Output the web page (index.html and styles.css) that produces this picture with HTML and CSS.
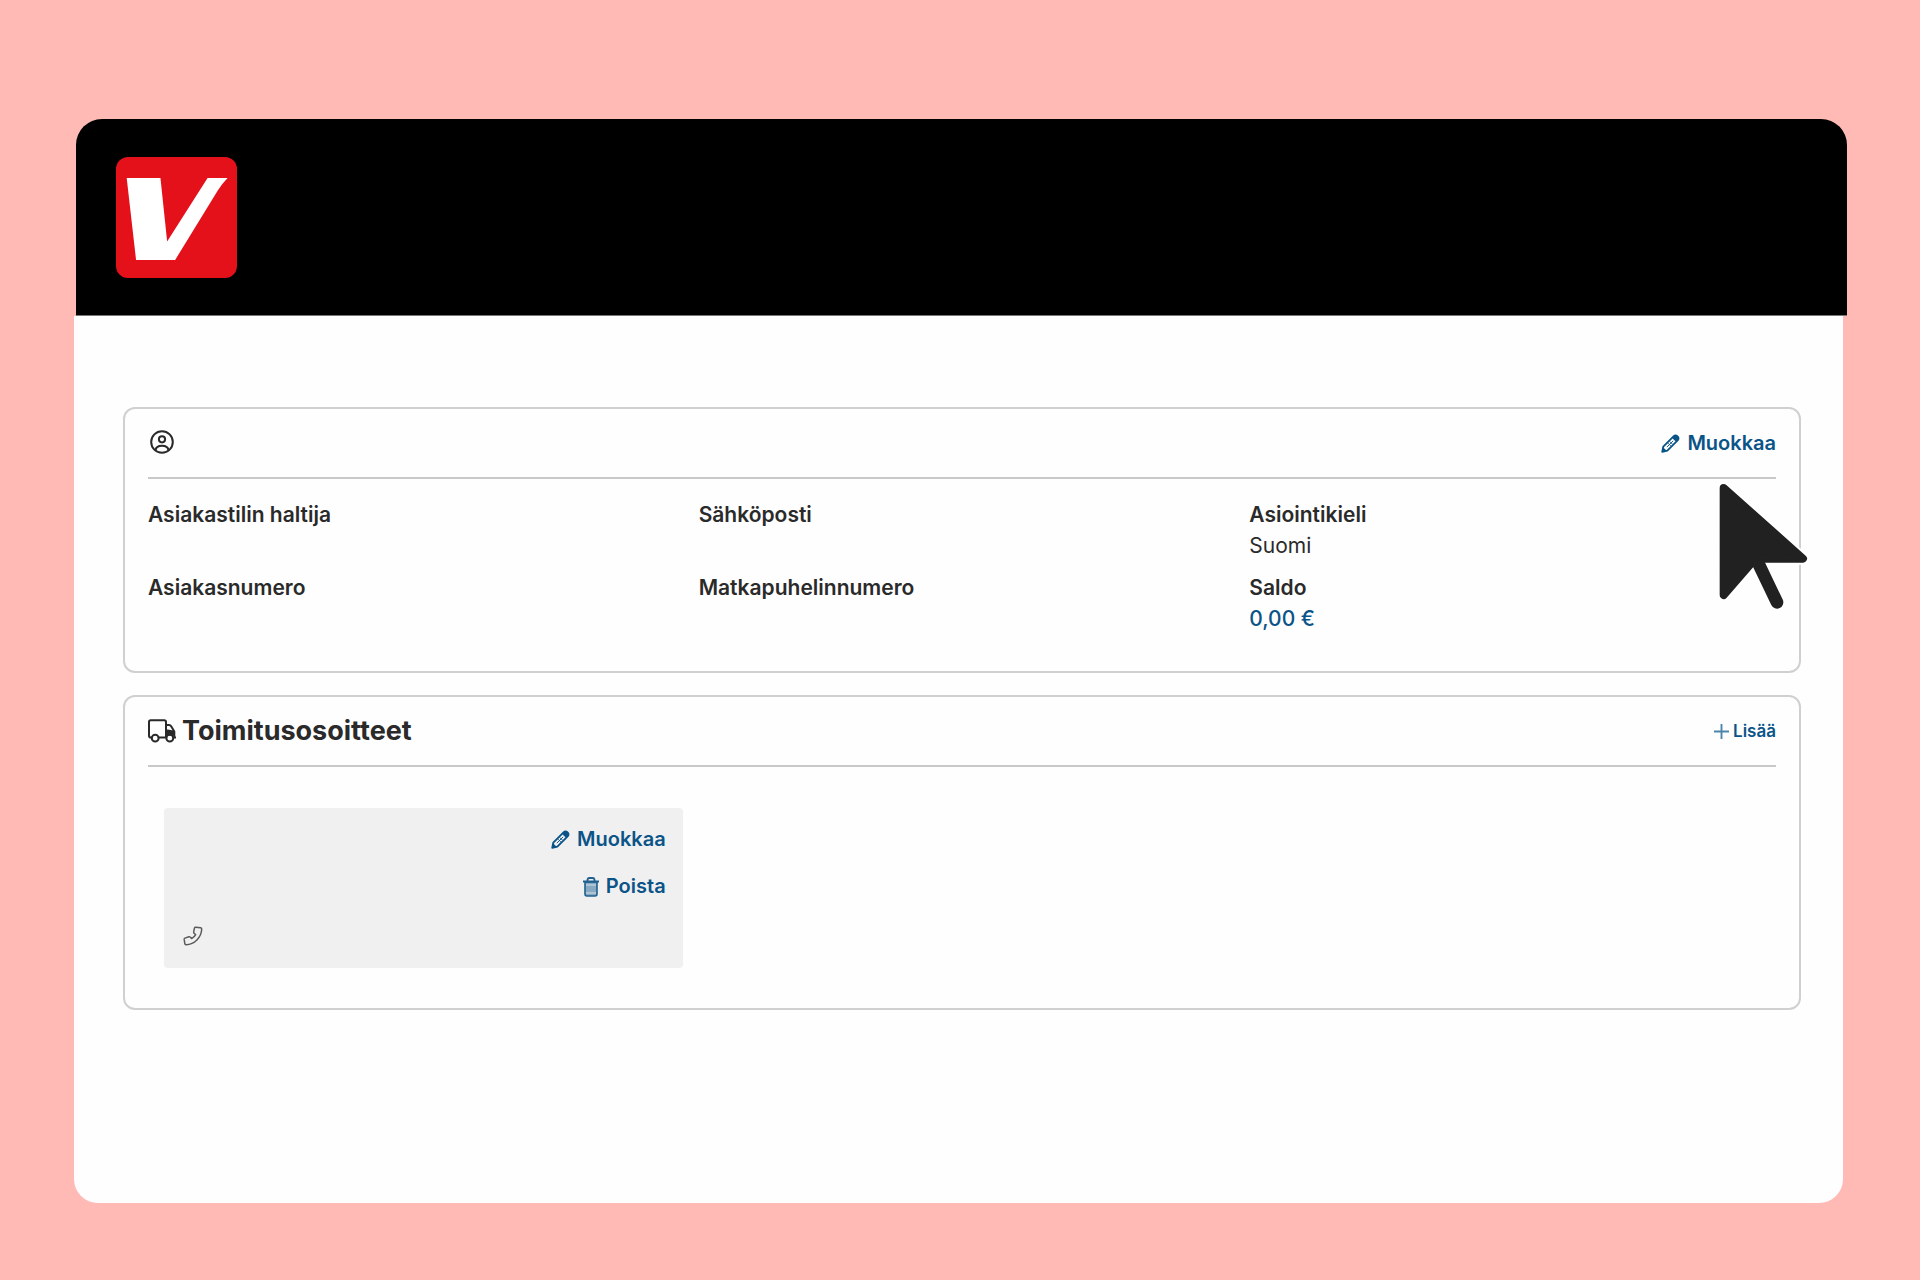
FILE: index.html
```html
<!DOCTYPE html>
<html lang="fi">
<head>
<meta charset="utf-8">
<meta name="viewport" content="width=device-width, initial-scale=1">
<title>Asiakastili</title>
<link rel="stylesheet" href="styles.css">
</head>
<body>
<svg class="sprite" aria-hidden="true">
  <symbol id="pencil" viewBox="0 0 20 20">
    <path d="M1.300 18.700 2.400 13.300 13.200 2.500Q15.200.600 17.400 2.600 19.400 4.800 17.500 6.800L6.700 17.600Z" fill="none" stroke="currentColor" stroke-width="1.900" stroke-linejoin="round"/>
    <path d="M11.500 4 14.200 1.500Q16 .700 17.800 2.200 19.300 4 18.500 5.800L16 8.500ZM1 19 2 13.800 6.200 18Z" fill="currentColor"/>
    <path d="M6.200 13.800 12.800 7.200M9.300 7.900l2.800 2.800M7.500 9.700l2.800 2.800" fill="none" stroke="currentColor" stroke-width="1"/>
  </symbol>
</svg>
<header class="topbar">
  <a class="logo" href="#" aria-label="Etusivu">
    <svg viewBox="0 0 362 362" aria-hidden="true">
      <rect width="362" height="362" rx="36" fill="#e4111b"/>
      <path d="M32 63H133L153 253 274 63H334Q318 79 304 101L177 308H60Z" fill="#fff"/>
    </svg>
  </a>
</header>
<main class="page">
  <section class="card" aria-label="Asiakastiedot">
    <div class="card-head">
      <svg class="icon-user" viewBox="0 0 24 24" fill="none" stroke="currentColor" stroke-width="2" aria-hidden="true">
        <circle cx="12" cy="12" r="10.800"/>
        <circle cx="12" cy="9.300" r="3.100"/>
        <path d="M5.600 20.300C5.800 16.900 8.500 15.700 12 15.700S18.200 16.900 18.400 20.300"/>
      </svg>
      <button class="action" type="button"><svg class="icon-pencil" aria-hidden="true"><use href="#pencil"/></svg>Muokkaa</button>
    </div>
    <dl class="details">
      <div class="detail"><dt>Asiakastilin haltija</dt><dd></dd></div>
      <div class="detail"><dt>Sähköposti</dt><dd></dd></div>
      <div class="detail"><dt>Asiointikieli</dt><dd>Suomi</dd></div>
      <div class="detail"><dt>Asiakasnumero</dt><dd></dd></div>
      <div class="detail"><dt>Matkapuhelinnumero</dt><dd></dd></div>
      <div class="detail"><dt>Saldo</dt><dd><a class="balance" href="#">0,00 €</a></dd></div>
    </dl>
    <svg class="pointer" viewBox="348 258 276 390" aria-hidden="true">
      <g fill="#fff" stroke="#fff" stroke-linejoin="round" stroke-linecap="round">
        <path d="M371 282 609 494H466L371 603Z" stroke-width="36"/>
        <path d="M476 510 531 625" stroke-width="46"/>
      </g>
      <g fill="#212121" stroke="#212121" stroke-linejoin="round" stroke-linecap="round">
        <path d="M371 282 609 494H466L371 603Z" stroke-width="24"/>
        <path d="M476 510 531 625" stroke-width="38"/>
      </g>
    </svg>
  </section>
  <section class="card" aria-labelledby="addresses">
    <div class="card-head">
      <div class="title">
        <svg class="icon-truck" viewBox="0 0 28 24" fill="none" stroke="currentColor" stroke-width="2" stroke-linejoin="round" aria-hidden="true">
          <path d="M4 18.500H2.800Q1 18.500 1 16.700V3Q1 1.200 2.800 1.200H16.200Q18 1.200 18 3V18.500M10.500 18.500H18M18 6H21Q22.500 6 23.300 7.400L26.300 12.500V18.500H25.500M26.300 18.500H28"/>
          <path d="M19.500 11.500 25.500 12.500V16L19.500 15Z" fill="currentColor"/>
          <circle cx="7.200" cy="19.200" r="3.400"/>
          <circle cx="21.800" cy="19.200" r="3.400"/>
        </svg>
        <h2 id="addresses">Toimitusosoitteet</h2>
      </div>
      <button class="action action-small" type="button">
        <svg class="icon-plus" viewBox="0 0 16 16" stroke="#4a86ab" stroke-width="2" aria-hidden="true"><path d="M8 0V16M0 8H16"/></svg>Lisää
      </button>
    </div>
    <div class="addresses">
      <article class="address">
        <div class="address-actions">
          <button class="action" type="button"><svg class="icon-pencil" aria-hidden="true"><use href="#pencil"/></svg>Muokkaa</button>
          <button class="action" type="button">
            <svg class="icon-trash" viewBox="0 0 16 20" aria-hidden="true">
              <path d="M2 5H14V17Q14 19 12 19H4Q2 19 2 17Z" fill="#87a9c1" stroke="#1f608f" stroke-width="1.600"/>
              <path d="M0 4.500H16M4.500 4V3Q4.500 1 6.500 1H9.500Q11.500 1 11.500 3V4" fill="none" stroke="#1f608f" stroke-width="1.800"/>
              <path d="M3 8H13M3 16H13" stroke="#d6e0e8" stroke-width="1"/>
            </svg>Poista
          </button>
        </div>
        <svg class="icon-phone" viewBox="0 0 20 20" fill="none" stroke="#5a5a5a" stroke-width="1.500" stroke-linejoin="round" aria-hidden="true">
          <path d="M12.600 1.200 17.600 1.800Q18.800 2 18.700 3.200C18.300 11.500 11.500 18.300 3.200 18.700Q2 18.800 1.800 17.600L1.200 13.400Q1.100 12.500 1.900 12.100L5.900 10.700Q6.700 10.500 7.200 11.100L8.600 12.600Q11.300 11.200 12.600 8.600L11.100 7.200Q10.500 6.700 10.700 5.900L11.500 1.900Q11.800 1.100 12.600 1.200Z"/>
        </svg>
      </article>
    </div>
  </section>
</main>
</body>
</html>
```

FILE: styles.css
```css
* { box-sizing: border-box; }

body {
  margin: 0;
  padding: 119px 0 72px;
  min-height: 100vh;
  background: #ffbab5;
  color: #2a2a2a;
  font-family: Inter, "Liberation Sans", sans-serif;
  font-size: 21px;
  line-height: 31px;
}

.sprite { display: none; }
svg { flex: none; }

.topbar {
  display: flex;
  align-items: center;
  height: 197px;
  margin: 0 73px 0 76px;
  padding: 0 40px;
  background: #000;
  border-bottom: 1px solid #777;
  border-radius: 26px 26px 0 0;
}

.logo, .logo svg { display: block; width: 121px; height: 121px; }

.page {
  display: flex;
  flex-direction: column;
  gap: 22px;
  margin: 0 77px 0 74px;
  padding: 91px 42px 193px 49px;
  background: #fefefe;
  border-radius: 0 0 24px 24px;
}

.card {
  position: relative;
  padding: 0 23px;
  border: 2px solid #d0d0d0;
  border-radius: 12px;
}

.card-head {
  display: flex;
  align-items: center;
  justify-content: space-between;
  height: 70px;
  border-bottom: 2px solid #c8c8c8;
}

.title { display: flex; align-items: center; gap: 6px; }

h2 { margin: 0; font-size: 27px; font-weight: 700; line-height: 32px; }

.action {
  display: flex;
  align-items: center;
  gap: 7px;
  padding: 0;
  border: 0;
  background: none;
  color: #0b5488;
  font: inherit;
  font-size: 20px;
  font-weight: 600;
  cursor: pointer;
}

.action-small { gap: 4px; font-size: 17px; }

.details {
  display: grid;
  grid-template-columns: repeat(3, 1fr);
  gap: 11px 24px;
  margin: 0;
  padding: 20px 0 37px;
}

dt { font-weight: 600; }
dd { min-height: 31px; margin: 0; }

.balance { color: #0b5488; font-weight: 500; text-decoration: none; }

.addresses {
  display: grid;
  grid-template-columns: repeat(3, 1fr);
  gap: 20px;
  padding: 41px 16px 40px;
}

.address {
  display: flex;
  flex-direction: column;
  justify-content: space-between;
  padding: 16px 17px 22px 19px;
  min-height: 160px;
  background: #f0f0f0;
  border-radius: 4px;
}

.address-actions {
  display: flex;
  flex-direction: column;
  align-items: flex-end;
  gap: 16px;
}

.icon-user { width: 24px; height: 24px; margin: 0 0 2px 2px; }
.icon-truck { width: 28px; height: 24px; }
.icon-pencil { width: 19px; height: 19px; }
.icon-plus { width: 15px; height: 15px; }
.icon-trash { width: 16px; height: 20px; }
.icon-phone { width: 20px; height: 20px; }

.pointer {
  position: absolute;
  top: 71px;
  right: -9px;
  width: 92px;
  height: 130px;
}
```
